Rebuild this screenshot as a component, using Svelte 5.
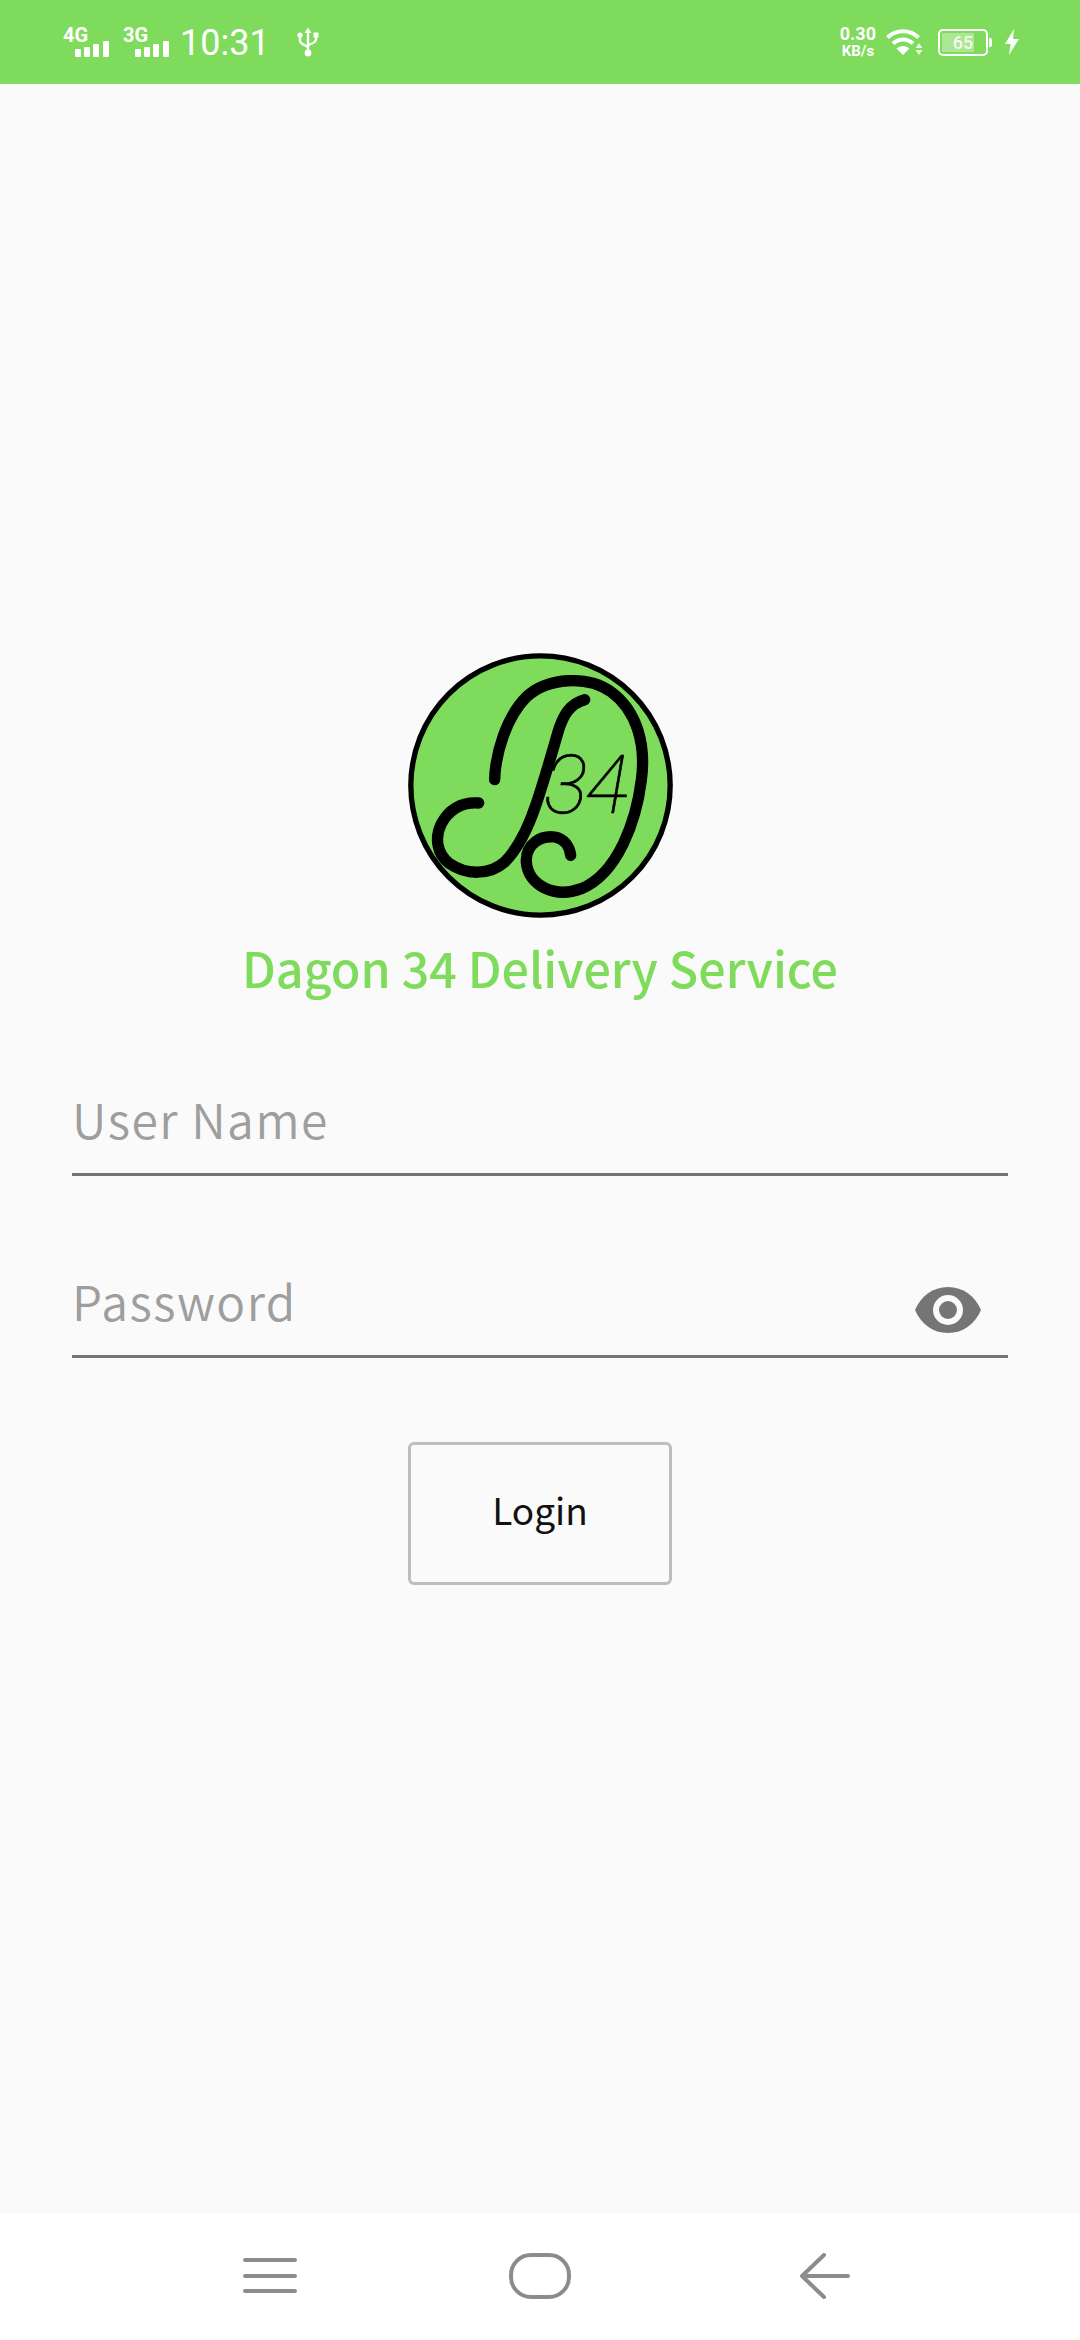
<script>
  let username = $state('');
  let password = $state('');
</script>

<div class="screen">
  <header class="status-bar">
    <div class="status-left">
      <svg class="signal" width="48" height="38" viewBox="0 0 48 38">
        <text x="0" y="21" class="net">4G</text>
        <rect x="12" y="28" width="6" height="8" rx="1" />
        <rect x="21" y="26" width="6" height="10" rx="1" />
        <rect x="30" y="23" width="6" height="13" rx="1" />
        <rect x="40" y="20" width="6" height="16" rx="1" />
      </svg>
      <svg class="signal second" width="48" height="38" viewBox="0 0 48 38">
        <text x="0" y="21" class="net">3G</text>
        <rect x="12" y="28" width="6" height="8" rx="1" />
        <rect x="21" y="26" width="6" height="10" rx="1" />
        <rect x="30" y="23" width="6" height="13" rx="1" />
        <rect x="40" y="20" width="6" height="16" rx="1" />
      </svg>
      <span class="time">10:31</span>
      <svg class="usb" width="22" height="30" viewBox="0 0 22 30" fill="none" stroke="#fff" stroke-width="2.4">
        <path d="M11 4V25" />
        <path d="M11 0.5 14.5 6H7.5Z" fill="#fff" stroke="none" />
        <circle cx="11" cy="26" r="3.4" fill="#fff" stroke="none" />
        <path d="M3 9V13.5C3 16 5 17 11 20" />
        <path d="M19 9V12C19 15 17 16 11 18" />
        <circle cx="3" cy="8" r="2.6" fill="#fff" stroke="none" />
        <rect x="16.5" y="5.5" width="5" height="5" fill="#fff" stroke="none" />
      </svg>
    </div>
    <div class="status-right">
      <div class="speed">
        <span class="speed-value">0.30</span>
        <span class="speed-unit">KB/s</span>
      </div>
      <svg class="wifi" width="37" height="28" viewBox="0 0 37 28" fill="none" stroke="#fff" stroke-width="4">
        <path d="M1.5 9.5C10 1 24 1 32.5 9.5" />
        <path d="M7 15.5C12.5 10 21.5 10 27 15.5" />
        <path d="M17 27 10.5 20.5C14 17 20 17 23.5 20.5Z" fill="#fff" stroke="none" />
        <path d="M33 15 36.5 20H29.5ZM33 27 29.5 22H36.5Z" fill="#fff" stroke="none" opacity="0.85" />
      </svg>
      <div class="battery">
        <div class="battery-fill"></div>
        <span class="battery-text">65</span>
        <div class="battery-tip"></div>
      </div>
      <svg class="bolt" width="14" height="26" viewBox="0 0 14 26">
        <path d="M9 0 0 15H5.5L4 26 14 10H8Z" fill="#fff" />
      </svg>
    </div>
  </header>

  <main class="content">
    <svg class="logo" width="265" height="265" viewBox="50 38 795 795">
      <circle cx="447.5" cy="435.5" r="389" fill="#7fdb5b" stroke="#000" stroke-width="16" />
      <g fill="none" stroke="#000" stroke-width="34" stroke-linecap="round">
        <path d="M310 418C312 340 345 230 405 170C470 110 590 105 660 155C735 210 765 310 750 420C735 540 680 700 570 745C490 775 410 735 405 665C402 610 450 585 490 590C520 595 535 620 538 645" />
        <path d="M580 178C535 190 515 225 500 275C480 345 460 415 435 490C415 550 385 620 340 665C295 705 225 705 175 670C135 640 130 590 150 550C175 505 215 485 262 488" />
      </g>
      <text x="458" y="518" class="logo-num">34</text>
    </svg>

    <h1 class="title">Dagon 34 Delivery Service</h1>

    <div class="form">
      <label class="field">
        <span class="placeholder">{username || 'User Name'}</span>
      </label>
      <label class="field">
        <span class="placeholder">{password || 'Password'}</span>
        <svg class="eye" width="66" height="46" viewBox="0 0 66 46">
          <path d="M33 0C18 0 6 9 0 23 6 37 18 46 33 46 48 46 60 37 66 23 60 9 48 0 33 0Z" fill="#757575" />
          <circle cx="33" cy="23" r="15" fill="#fafafa" />
          <circle cx="33" cy="23" r="9" fill="#757575" />
        </svg>
      </label>
    </div>

    <button class="login">Login</button>
  </main>

  <nav class="nav-bar">
    <svg class="nav-menu" width="54" height="36" viewBox="0 0 54 36" stroke="#8c8c8c" stroke-width="4" stroke-linecap="round">
      <path d="M2 2H52M2 18H52M2 33H52" />
    </svg>
    <svg class="nav-home" width="62" height="46" viewBox="0 0 62 46" fill="none" stroke="#8c8c8c" stroke-width="4">
      <rect x="2" y="2" width="58" height="42" rx="20" />
    </svg>
    <svg class="nav-back" width="50" height="46" viewBox="0 0 50 46" fill="none" stroke="#8c8c8c" stroke-width="4" stroke-linecap="round" stroke-linejoin="round">
      <path d="M24 2 2 23 24 44M2 23H48" />
    </svg>
  </nav>
</div>

<style>
  :global(body) {
    margin: 0;
  }

  .screen {
    width: 1080px;
    height: 2340px;
    display: flex;
    flex-direction: column;
    background: #fafafa;
    font-family: "Noto Sans CJK SC", "Noto Sans", sans-serif;
    overflow: hidden;
  }

  .status-bar {
    height: 84px;
    flex: none;
    background: #7fdb5b;
    display: flex;
    justify-content: space-between;
    align-items: center;
    padding: 0 61px 0 63px;
    box-sizing: border-box;
    color: #fff;
  }

  .status-left,
  .status-right {
    display: flex;
    align-items: center;
  }

  .signal {
    fill: #fff;
    margin-top: -4px;
  }

  .signal.second {
    margin-left: 12px;
  }

  .net {
    font-family: Roboto, sans-serif;
    font-size: 20px;
    font-weight: 700;
  }

  .time {
    font-family: Roboto, sans-serif;
    font-size: 36px;
    margin: 2px 0 0 9px;
    line-height: 1;
  }

  .usb {
    margin-left: 27px;
  }

  .speed {
    display: flex;
    flex-direction: column;
    align-items: center;
    font-family: Roboto, sans-serif;
    font-weight: 700;
    line-height: 1;
  }

  .speed-value {
    font-size: 18px;
  }

  .speed-unit {
    font-size: 15px;
    margin-top: 1px;
  }

  .wifi {
    margin-left: 10px;
  }

  .battery {
    position: relative;
    width: 50px;
    height: 27px;
    margin-left: 15px;
    border: 2.5px solid #fff;
    border-radius: 5px;
    box-sizing: border-box;
    display: flex;
    align-items: center;
    justify-content: center;
  }

  .battery-fill {
    position: absolute;
    left: 2px;
    top: 2px;
    bottom: 2px;
    width: 32px;
    background: rgba(255, 255, 255, 0.35);
    border-radius: 1px;
  }

  .battery-text {
    position: relative;
    font-family: Roboto, sans-serif;
    font-size: 18px;
    font-weight: 500;
    color: rgba(255, 255, 255, 0.85);
  }

  .battery-tip {
    position: absolute;
    right: -6px;
    top: 7px;
    width: 3px;
    height: 9px;
    background: #fff;
    border-radius: 0 2px 2px 0;
  }

  .bolt {
    margin-left: 17px;
  }

  .content {
    flex: 1;
    display: flex;
    flex-direction: column;
    align-items: center;
    padding-top: 569px;
  }

  .logo {
    display: block;
  }

  .logo-num {
    font-family: Roboto, sans-serif;
    font-weight: 100;
    font-style: italic;
    font-size: 245px;
    letter-spacing: -6px;
    fill: #000;
    stroke: #000;
    stroke-width: 2px;
  }

  .title {
    margin: 13px 0 0;
    font-size: 48.4px;
    line-height: 72px;
    font-weight: 500;
    color: #7fdb5b;
  }

  .form {
    width: 936px;
    margin-top: 79px;
    display: flex;
    flex-direction: column;
    gap: 88px;
  }

  .field {
    height: 94px;
    border-bottom: 3px solid #757575;
    box-sizing: border-box;
    display: flex;
    justify-content: space-between;
    align-items: flex-end;
    position: relative;
  }

  .placeholder {
    font-size: 48px;
    font-weight: 350;
    line-height: 70px;
    letter-spacing: 1.5px;
    color: #9e9e9e;
    margin: 0 0 20px 0;
  }

  .eye {
    margin: 0 27px 22px 0;
  }

  .login {
    margin-top: 84px;
    width: 264px;
    height: 143px;
    box-sizing: border-box;
    background: transparent;
    border: 3px solid #bdbdbd;
    border-radius: 6px;
    font-family: inherit;
    font-size: 37px;
    color: #111;
    padding: 0 0 10px;
  }

  .nav-bar {
    height: 127px;
    flex: none;
    background: #fff;
    display: flex;
    align-items: center;
    padding-left: 243px;
    padding-bottom: 2px;
    box-sizing: border-box;
  }

  .nav-home {
    margin-left: 212px;
  }

  .nav-back {
    margin-left: 229px;
  }
</style>
